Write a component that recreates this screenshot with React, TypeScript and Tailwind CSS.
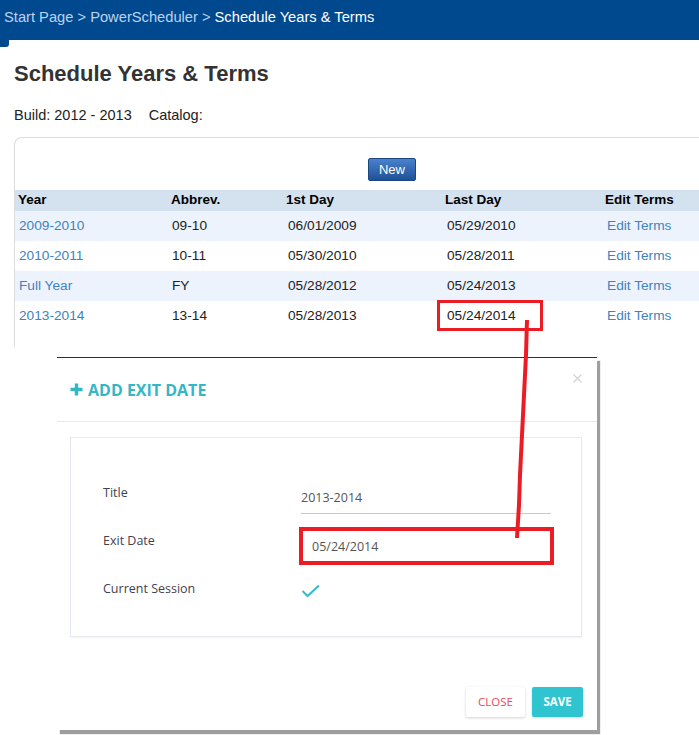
import React from "react";

const rows = [
  { year: "2009-2010", abbr: "09-10", first: "06/01/2009", last: "05/29/2010" },
  { year: "2010-2011", abbr: "10-11", first: "05/30/2010", last: "05/28/2011" },
  { year: "Full Year", abbr: "FY", first: "05/28/2012", last: "05/24/2013" },
  { year: "2013-2014", abbr: "13-14", first: "05/28/2013", last: "05/24/2014" },
];

const cols = "grid grid-cols-[153px_115px_159px_160px_1fr]";

function YearsTable() {
  return (
    <div className="ml-[14px] mt-[13px] h-[210px] rounded-tl-[8px] border-l border-t border-[#dcdcdc] pt-[20px]">
      <div className="flex pl-[353px]">
        <button className="h-[23px] w-[48px] rounded-[2px] border border-[#1b4682] bg-gradient-to-b from-[#4a82cc] to-[#1f5197] text-[13px] leading-none text-white">
          New
        </button>
      </div>
      <div className={`${cols} mt-[9px] h-[21px] items-center bg-[#d4e2f0] text-[13.5px] font-bold text-black`}>
        <div className="pl-[3px]">Year</div>
        <div className="pl-[3px]">Abbrev.</div>
        <div className="pl-[3px]">1st Day</div>
        <div className="pl-[3px]">Last Day</div>
        <div className="pl-[3px]">Edit Terms</div>
      </div>
      {rows.map((r, i) => (
        <div
          key={r.year}
          className={`${cols} h-[30px] items-center text-[13.7px] text-[#222] ${i % 2 === 0 ? "bg-[#edf3fd]" : "bg-white"}`}
        >
          <div className="pl-[4px] text-[#3d83c2]">{r.year}</div>
          <div className="pl-[4px]">{r.abbr}</div>
          <div className="pl-[5px]">{r.first}</div>
          <div className="pl-[5px]">{r.last}</div>
          <div className="pl-[5px] text-[#3d83c2]">Edit Terms</div>
        </div>
      ))}
    </div>
  );
}

function FieldRow({ label, children }: { label: string; children: React.ReactNode }) {
  return (
    <div className="flex h-[48px] items-start">
      <div className="w-[198px] text-[12.5px] leading-[18px] text-[#3f4250]">{label}</div>
      <div className="w-[250px]">{children}</div>
    </div>
  );
}

function ExitDateModal() {
  return (
    <div className="absolute left-[57px] top-[357px] h-[373px] w-[540px] border-t border-[#2b303b] bg-white font-['Open_Sans',sans-serif] shadow-[3px_4px_1px_rgba(0,0,0,0.38)]">
      <div className="relative flex h-[64px] items-center border-b border-[#e9e9e9] pl-[13px]">
        <svg width="13" height="13" viewBox="0 0 13 13" className="mr-[5px]">
          <path d="M6.5 0.5 V12.5 M0.5 6.5 H12.5" stroke="#33b7c6" strokeWidth="3.4" />
        </svg>
        <span className="text-[16px] font-bold leading-none text-[#33b7c6]">ADD EXIT DATE</span>
        <svg width="9" height="9" viewBox="0 0 9 9" className="absolute right-[15px] top-[16px]">
          <path d="M0.5 0.5 L8.5 8.5 M8.5 0.5 L0.5 8.5" stroke="#d4d4d4" strokeWidth="1.3" />
        </svg>
      </div>
      <div className="mx-[13px] mr-[15px] mt-[15px] h-[200px] border border-[#e6e9ee] pl-[32px] pt-[46px] shadow-[0_1px_2px_rgba(0,0,0,0.05)]">
        <FieldRow label="Title">
          <div className="h-[30px] border-b border-[#c6cad1] pt-[5px] text-[12.5px] leading-[18px] text-[#555]">
            2013-2014
          </div>
        </FieldRow>
        <FieldRow label="Exit Date">
          <div className="h-[30px] border-b border-[#c6cad1] pl-[11px] pt-[6px] text-[12.5px] leading-[18px] text-[#555]">
            05/24/2014
          </div>
        </FieldRow>
        <FieldRow label="Current Session">
          <svg width="20" height="14" viewBox="0 0 20 14" className="mt-[4px]">
            <path d="M1.5 7 L6.5 12 L18 1.5" fill="none" stroke="#33bccb" strokeWidth="2" />
          </svg>
        </FieldRow>
      </div>
      <div className="mt-[50px] flex justify-end gap-[7px] pr-[14px]">
        <button className="h-[30px] w-[59px] rounded-[2px] bg-white text-[11.5px] text-[#e64a5e] shadow-[0_1px_3px_rgba(0,0,0,0.18)]">
          CLOSE
        </button>
        <button className="h-[30px] w-[51px] rounded-[2px] bg-[#30c4d1] text-[11.5px] font-bold text-white shadow-[0_1px_3px_rgba(0,0,0,0.15)]">
          SAVE
        </button>
      </div>
    </div>
  );
}

export default function App() {
  return (
    <div className="relative h-[735px] w-[699px] overflow-hidden bg-white font-['Liberation_Sans',Arial,sans-serif]">
      <div className="flex h-[40px] items-start bg-[#00498f] pl-[4px] pt-[8px] text-[14.7px] leading-[18px]">
        <span className="text-[#bcd3ee]">Start Page &gt; PowerScheduler &gt; </span>
        <span className="ml-[4px] text-white">Schedule Years &amp; Terms</span>
      </div>
      <div className="absolute left-0 top-[40px] h-[7px] w-[9px] rounded-br-[3px] bg-[#00498f]" />

      <h1 className="ml-[14px] mt-[21px] text-[22px] font-bold leading-[26px] text-[#333]">
        Schedule Years &amp; Terms
      </h1>
      <div className="ml-[14px] mt-[20px] text-[14.5px] leading-[17px] text-[#222]">
        Build: 2012 - 2013<span className="ml-[17px]">Catalog:</span>
      </div>
      <YearsTable />

      <ExitDateModal />

      <div className="pointer-events-none absolute left-[437px] top-[300px] h-[31px] w-[106px] border-[3px] border-[#ec1c24]" />
      <div className="pointer-events-none absolute left-[299px] top-[527px] h-[38px] w-[255px] border-[4px] border-[#ec1c24]" />
      <svg className="pointer-events-none absolute left-0 top-0" width="699" height="735">
        <polyline
          points="527,320 526,355 524,395 522,435 520,475 519,505 517,538"
          fill="none"
          stroke="#ec1c24"
          strokeWidth="4"
        />
      </svg>
    </div>
  );
}
